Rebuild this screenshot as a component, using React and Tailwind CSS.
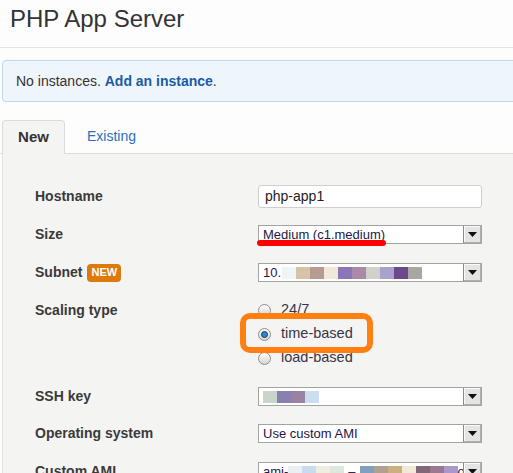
import React from 'react';

const font = { fontFamily: '"Liberation Sans", Arial, sans-serif' };

function Arrow() {
  return (
    <div className="flex h-full w-[18px] shrink-0 items-center justify-center border-l border-[#8c8c8c] bg-[#e4e4e4] shadow-[inset_-1px_-1px_0_#b0b0b0,inset_1px_1px_0_#fafafa]">
      <svg width="9" height="5" viewBox="0 0 9 5">
        <path d="M0 0h9L4.5 5z" fill="#111" />
      </svg>
    </div>
  );
}

function Select({ children, className = '' }) {
  return (
    <div className={`relative flex h-[19px] w-[224px] items-stretch border border-[#a3a3a3] bg-white ${className}`}>
      <div className="flex flex-1 items-center overflow-hidden pl-[4px] text-[13px] text-[#1d1646]">{children}</div>
      <Arrow />
    </div>
  );
}

function Blocks({ colors, h = 'h-[12px]' }) {
  return (
    <div className="flex">
      {colors.map((c, i) => (
        <div key={i} className={`${h} w-[14px]`} style={{ backgroundColor: c }} />
      ))}
    </div>
  );
}

function Radio({ checked }) {
  return (
    <div className="flex h-[13px] w-[13px] items-center justify-center rounded-full border border-[#8f8f8f] bg-gradient-to-b from-[#ffffff] to-[#d4d4d4]">
      {checked && <div className="h-[7px] w-[7px] rounded-full border border-[#1c3d66] bg-[#2c86d2]" />}
    </div>
  );
}

function Row({ label, children, className = '' }) {
  return (
    <div className={`flex ${className}`}>
      <div className="w-[223px] shrink-0 text-[14px] font-bold text-[#3a3a3a]">{label}</div>
      {children}
    </div>
  );
}

export default function App() {
  return (
    <div className="h-[473px] w-[513px] overflow-hidden bg-[#fdfdfd]" style={font}>
      {/* Title */}
      <div className="h-[48px] border-b border-[#e3e3e3] pl-[10px] pt-[5px] text-[24px] leading-[28px] text-[#333]">
        PHP App Server
      </div>

      {/* Info */}
      <div className="ml-[2px] mr-[-10px] mt-[12px] flex h-[42px] items-center rounded-l-[4px] border border-[#bdd8ef] bg-[#eff6fb] pl-[13px] text-[14px] text-[#333]">
        <span>No instances.&nbsp;</span>
        <a className="font-bold text-[#1b5aa6]">Add an instance</a>
        <span>.</span>
      </div>

      {/* Tabs */}
      <div className="mt-[18px] flex items-end border-b border-[#dcdcdc] pl-[2px]">
        <div className="-mb-px flex h-[34px] w-[63px] items-center justify-center rounded-t-[4px] border border-b-0 border-[#dcdcdc] bg-[#f4f4f2] text-[15px] font-bold text-[#333]">
          New
        </div>
        <div className="flex h-[33px] items-center pl-[22px] text-[14px] text-[#2d6dc4]">Existing</div>
      </div>

      {/* Panel */}
      <div className="ml-[2px] h-[400px] border-l border-[#e2e2e2] bg-[#f4f4f2] pl-[32px] pt-[31px]">
        <Row label="Hostname" className="h-[23px] items-center">
          <div className="flex h-[23px] w-[224px] items-center rounded-[3px] border border-[#cfcfcf] bg-white pl-[6px] text-[14px] text-[#222]">
            php-app1
          </div>
        </Row>

        <Row label="Size" className="mt-[17px] h-[19px] items-center">
          <div className="relative">
            <Select>Medium (c1.medium)</Select>
            <div className="absolute left-[-1px] top-[15px] h-[6px] w-[129px] rounded-full bg-[#ff0000]" />
          </div>
        </Row>

        <Row
          label={
            <span className="flex items-center gap-[5px]">
              Subnet
              <span className="flex h-[18px] items-center rounded-[4px] bg-[#de7a0c] px-[4px] text-[11px] font-bold text-white">NEW</span>
            </span>
          }
          className="mt-[19px] h-[19px] items-center"
        >
          <Select>
            <span className="mr-[1px]">10.</span>
            <Blocks colors={['#eef4f8', '#d5c4a6', '#b79a90', '#f1e8da', '#8b76b8', '#a98aa8', '#d1d1c9', '#a8a2cd', '#6a4a8c', '#a8a7a0']} />
          </Select>
        </Row>

        <Row label={<span className="flex h-[24px] items-center">Scaling type</span>} className="mt-[16px] h-[72px] items-start">
          <div className="relative flex flex-col text-[14.5px] text-[#35344a]">
            <div className="flex h-[24px] items-center gap-[10px]"><Radio /><span>24/7</span></div>
            <div className="flex h-[24px] items-center gap-[10px]"><Radio checked /><span>time-based</span></div>
            <div className="flex h-[24px] items-center gap-[10px]"><Radio /><span>load-based</span></div>
            <div className="absolute left-[-18px] top-[15px] h-[40px] w-[133px] rounded-[10px] border-[6px] border-[#ff7f10]" />
          </div>
        </Row>

        <Row label="SSH key" className="mt-[17px] h-[19px] items-center">
          <Select>
            <Blocks colors={['#c9d5c9', '#8780b0', '#9a82a2', '#cadef2']} />
          </Select>
        </Row>

        <Row label="Operating system" className="mt-[18px] h-[19px] items-center">
          <Select>Use custom AMI</Select>
        </Row>

        <Row label="Custom AMI" className="mt-[19px] h-[19px] items-center">
          <Select>
            <span>ami-</span>
            <Blocks colors={['#e8f0f4', '#c8dcf0', '#f1ece0', '#dce8dc']} />
            <span className="mx-[4px]">–</span>
            <Blocks colors={['#80a0c0', '#b0a090', '#c8b080', '#f0e8d8', '#806878', '#9a7890', '#a898cc']} />
            <span>o</span>
          </Select>
        </Row>
      </div>
    </div>
  );
}
